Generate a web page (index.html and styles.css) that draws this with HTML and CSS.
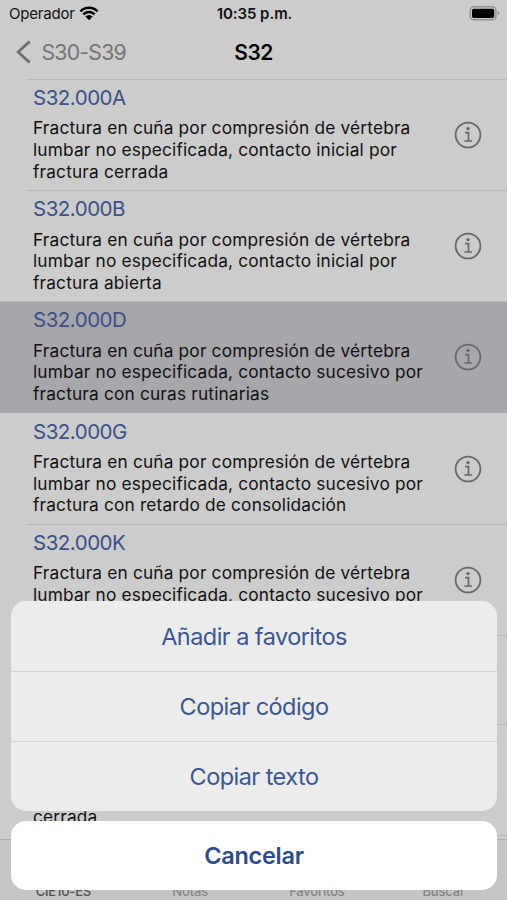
FILE: index.html
```html
<!DOCTYPE html>
<html lang="es">
<head>
  <meta charset="UTF-8">
  <meta name="viewport" content="width=device-width, initial-scale=1.0">
  <title>S32</title>
  <link rel="stylesheet" href="styles.css">
</head>
<body>
  <svg class="defs" width="0" height="0">
    <symbol id="info" viewBox="0 0 28 28">
      <circle cx="14" cy="14" r="12.4" fill="none" stroke="currentColor" stroke-width="1.8"/>
      <circle cx="14" cy="7.6" r="1.7" fill="currentColor"/>
      <path d="M11 11.7h3.5v8.1M10.4 20h7.6" fill="none" stroke="currentColor" stroke-width="1.7"/>
    </symbol>
  </svg>

  <div class="app">
    <div class="status-bar">
      <div class="carrier">
        <span>Operador</span>
        <svg width="20" height="15" viewBox="0 0 20 15">
          <path d="M1.4 5.3a12.3 12.3 0 0 1 17.2 0M4.3 8.4a8.1 8.1 0 0 1 11.4 0" fill="none" stroke="#000" stroke-width="2.4"/>
          <path d="M6.3 10.5a5.2 5.2 0 0 1 7.4 0L10 14.2z"/>
        </svg>
      </div>
      <div class="time">10:35 p.m.</div>
      <div class="battery">
        <svg width="31" height="15" viewBox="0 0 31 15">
          <rect x="1.3" y="0.8" width="25.6" height="13" rx="3.6" fill="none" stroke="#929292" stroke-width="1.5"/>
          <rect x="3" y="2.7" width="22.2" height="9.2" rx="1.6"/>
          <path d="M28.6 5.2v4.2q1.8-.5 1.8-2.1t-1.8-2.1z" fill="#929292"/>
        </svg>
      </div>
    </div>

    <div class="nav-bar">
      <div class="back">
        <svg width="16" height="24" viewBox="0 0 16 24">
          <path d="M13.6 1.5L2.2 12l11.4 10.5" fill="none" stroke="#6e6e6e" stroke-width="2.8"/>
        </svg>
        <span>S30-S39</span>
      </div>
      <h1>S32</h1>
    </div>

    <ul class="list">
      <li class="row">
        <div class="text">
          <h2>S32.000A</h2>
          <p>Fractura en cuña por compresión de vértebra<br>lumbar no especificada, contacto inicial por<br>fractura cerrada</p>
        </div>
        <svg class="info"><use href="#info"/></svg>
      </li>
      <li class="row">
        <div class="text">
          <h2>S32.000B</h2>
          <p>Fractura en cuña por compresión de vértebra<br>lumbar no especificada, contacto inicial por<br>fractura abierta</p>
        </div>
        <svg class="info"><use href="#info"/></svg>
      </li>
      <li class="row selected">
        <div class="text">
          <h2>S32.000D</h2>
          <p>Fractura en cuña por compresión de vértebra<br>lumbar no especificada, contacto sucesivo por<br>fractura con curas rutinarias</p>
        </div>
        <svg class="info"><use href="#info"/></svg>
      </li>
      <li class="row">
        <div class="text">
          <h2>S32.000G</h2>
          <p>Fractura en cuña por compresión de vértebra<br>lumbar no especificada, contacto sucesivo por<br>fractura con retardo de consolidación</p>
        </div>
        <svg class="info"><use href="#info"/></svg>
      </li>
      <li class="row">
        <div class="text">
          <h2>S32.000K</h2>
          <p>Fractura en cuña por compresión de vértebra<br>lumbar no especificada, contacto sucesivo por</p>
        </div>
        <svg class="info"><use href="#info"/></svg>
      </li>
      <li class="row short"></li>
      <li class="row last">
        <div class="text">
          <p>cerrada</p>
        </div>
      </li>
    </ul>

    <div class="tab-bar">
      <span class="active">CIE10-ES</span>
      <span>Notas</span>
      <span>Favoritos</span>
      <span>Buscar</span>
    </div>
  </div>

  <div class="action-sheet">
    <div class="actions">
      <button>Añadir a favoritos</button>
      <button>Copiar código</button>
      <button>Copiar texto</button>
    </div>
    <button class="cancel">Cancelar</button>
  </div>
</body>
</html>
```

FILE: styles.css
```css
* {
  box-sizing: border-box;
}

body {
  margin: 0;
  font-family: Inter, "Liberation Sans", sans-serif;
  background: #ccc;
  color: #111;
  overflow: hidden;
}

h1, h2, p, ul {
  margin: 0;
  padding: 0;
}

.defs {
  position: absolute;
}

.app {
  display: flex;
  flex-direction: column;
  height: 900px;
  overflow: hidden;
}

.status-bar {
  display: grid;
  grid-template-columns: 1fr auto 1fr;
  align-items: center;
  height: 27px;
  padding: 0 7px 0 9px;
  font-size: 15px;
}

.carrier {
  display: flex;
  align-items: center;
  gap: 4px;
  letter-spacing: -0.2px;
}

.time {
  font-weight: 600;
  letter-spacing: -0.05px;
}

.battery {
  display: flex;
  justify-content: flex-end;
}

.nav-bar {
  display: grid;
  grid-template-columns: 1fr auto 1fr;
  align-items: center;
  height: 52px;
  padding: 0 16px 2px;
}

.back {
  display: flex;
  align-items: center;
  gap: 9.5px;
  color: #757575;
  font-size: 21.3px;
  letter-spacing: -0.8px;
}

.nav-bar h1 {
  color: #000;
  font-size: 21px;
  font-weight: 600;
  letter-spacing: -0.6px;
}

.list {
  flex: none;
  height: 760px;
  list-style: none;
}

.row {
  display: flex;
  align-items: center;
  height: 111.2px;
  margin-left: 26px;
  padding: 0 25px 0 7px;
  border-top: 1px solid #b8b8b8;
}

.text {
  flex: 1;
  align-self: flex-start;
}

.row h2 {
  height: 37.4px;
  color: #3b5086;
  font-size: 20.5px;
  font-weight: 400;
  letter-spacing: -0.5px;
  line-height: 36px;
}

.row p {
  font-size: 17.3px;
  letter-spacing: 0.17px;
  line-height: 21.7px;
  white-space: nowrap;
}

.info {
  width: 28px;
  height: 28px;
  color: #686868;
}

.selected {
  margin-left: 0;
  padding-left: 33px;
  background: #a7a6ab;
}

.selected + .row {
  border-top-color: transparent;
}

.short {
  height: 89px;
}

.last {
  height: 112px;
  padding-top: 81px;
  border-bottom: 1px solid #b8b8b8;
}

.tab-bar {
  display: grid;
  grid-template-columns: repeat(4, 1fr);
  flex: none;
  height: 61px;
  padding-top: 43px;
  background: #c5c5c5;
  border-top: 1px solid #adadad;
  color: #858585;
  font-size: 13px;
  font-weight: 500;
  letter-spacing: -0.2px;
  line-height: 16px;
  text-align: center;
}

.tab-bar .active {
  color: #505050;
}

/* menu over the list */
.action-sheet {
  position: absolute;
  top: 601px;
  left: 11px;
  width: 486px;
}

.actions {
  overflow: hidden;
  border-radius: 15px;
  background: #ececec;
}

.action-sheet button {
  display: block;
  width: 100%;
  height: 70px;
  padding: 0;
  border: none;
  background: none;
  color: #3b5790;
  font-family: inherit;
  font-size: 23.5px;
  letter-spacing: -0.55px;
}

.actions button + button {
  border-top: 1px solid #d2d2d2;
}

.action-sheet .cancel {
  height: 69px;
  margin-top: 10px;
  border-radius: 15px;
  background: #fff;
  color: #2d4c86;
  font-weight: 600;
  letter-spacing: -0.3px;
}
```
